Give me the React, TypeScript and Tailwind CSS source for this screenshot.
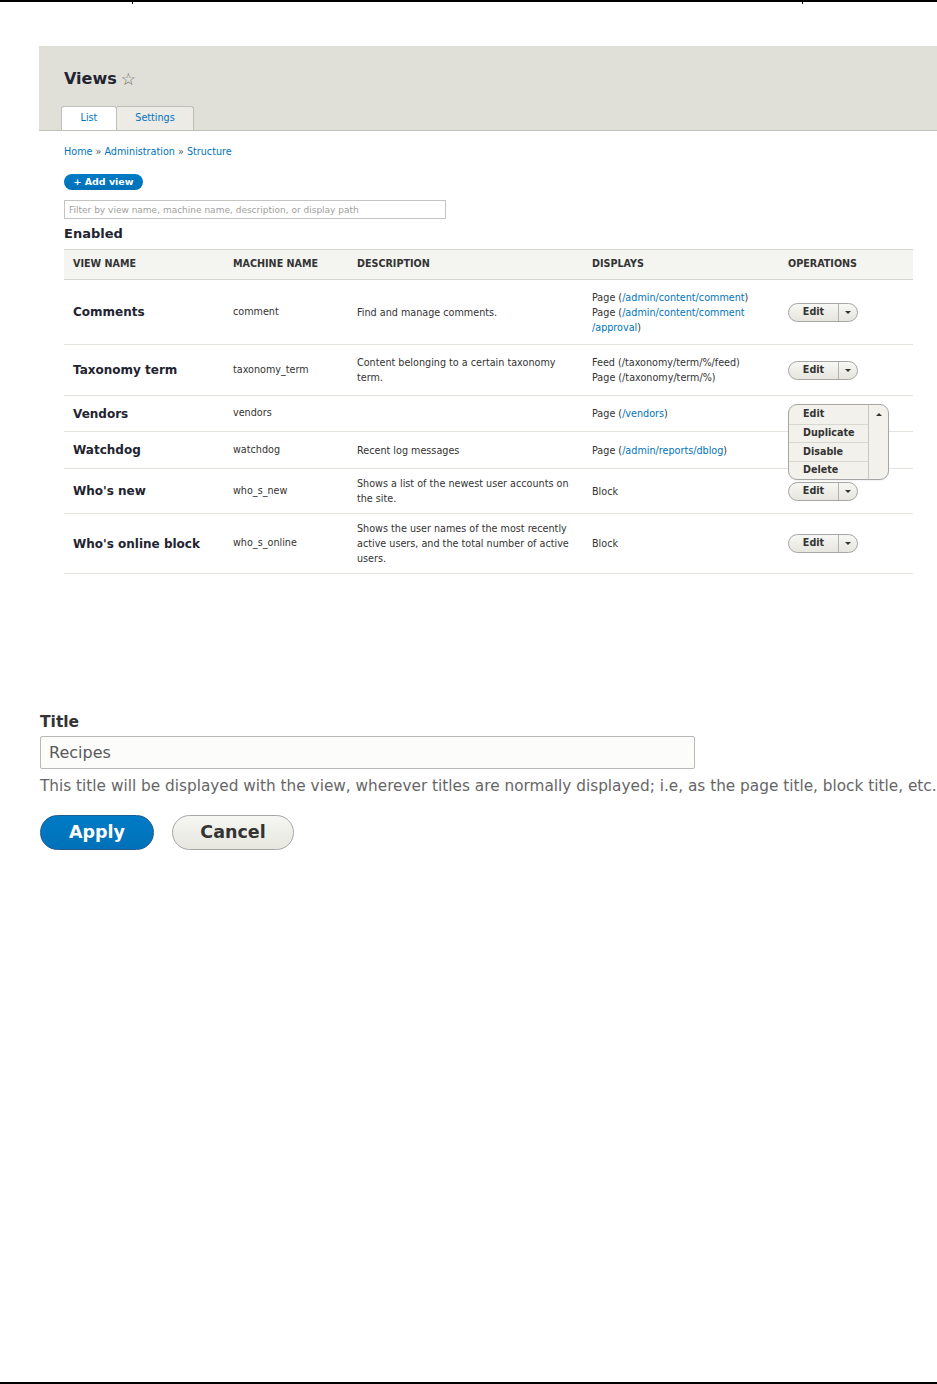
import type { ReactNode } from "react";

const link = "text-[#0074bd]";

function Caret({ up }: { up?: boolean }) {
    return up ? (
        <span className="block w-0 h-0 border-x-[3px] border-x-transparent border-b-[3px] border-b-[#333]" />
    ) : (
        <span className="block w-0 h-0 border-x-[3px] border-x-transparent border-t-[3px] border-t-[#333]" />
    );
}

function EditButton() {
    return (
        <div className="flex w-[70px] h-[19px] rounded-full border border-[#a6a6a6] bg-gradient-to-b from-[#f7f7f4] to-[#e6e5de] text-[9.6px] font-bold text-[#333]">
            <div className="w-[50px] flex items-center justify-center border-r border-[#b4b4ae]">Edit</div>
            <div className="flex-1 flex items-center justify-center"><Caret /></div>
        </div>
    );
}

function OpenDropdown() {
    const items = ["Edit", "Duplicate", "Disable", "Delete"];
    return (
        <div className="relative h-[19px]">
            <div className="absolute left-0 top-0 z-10 flex w-[101px] rounded-[9px] border border-[#a6a6a6] bg-[#f2f1eb] text-[9.6px] font-bold text-[#333] shadow-[0_1px_1px_rgba(0,0,0,0.05)]">
                <div className="w-[80px] flex flex-col border-r border-[#c8c8c0]">
                    {items.map((item, i) => (
                        <div key={item} className={`h-[18.5px] flex items-center pl-[14px] ${i > 0 ? "border-t border-[#d8d8d0]" : ""}`}>
                            {item}
                        </div>
                    ))}
                </div>
                <div className="flex-1 flex justify-center pt-[8px]"><Caret up /></div>
            </div>
        </div>
    );
}

type RowProps = {
    name: string;
    machine: string;
    desc?: ReactNode;
    displays: ReactNode;
    height: string;
    ops?: ReactNode;
    opsTop?: boolean;
};

function Row({ name, machine, desc, displays, height, ops, opsTop }: RowProps) {
    return (
        <tr className={`${height} border-b border-[#e4e3dd]`}>
            <td className="pl-[9px] text-[12px] font-bold text-[#222330]">{name}</td>
            <td className="pl-[9px] text-[9.65px] text-[#333]">{machine}</td>
            <td className="pl-[9px] text-[9.65px] leading-[15px] text-[#333] whitespace-nowrap">{desc}</td>
            <td className="pl-[9px] text-[9.65px] leading-[15px] text-[#333] whitespace-nowrap">{displays}</td>
            <td className={`pl-[9px] ${opsTop ? "align-top pt-[8px]" : ""}`}>{ops ?? <EditButton />}</td>
        </tr>
    );
}

export default function App() {
    return (
        <div className="flex flex-col h-[1384px] w-[937px] bg-white font-['DejaVu_Sans',sans-serif] text-[#222330]">
            <div className="flex h-[4px] border-t-2 border-black shrink-0">
                <div className="w-[133px] h-[2px] border-r border-black" />
                <div className="w-[670px] h-[2px] border-r border-black" />
            </div>

            <div className="ml-[39px] mt-[42px] h-[85px] shrink-0 bg-[#e0e0d8] border-b border-[#bfbfba] pl-[22px] flex flex-col">
                <div className="h-[60px] pt-[24px] pl-[3px] flex items-start">
                    <h1 className="text-[16px] leading-[18px] font-bold text-[#222330]">Views</h1>
                    <span className="ml-[4px] text-[17px] leading-[18px] text-[#6f6f68]">☆</span>
                </div>
                <div className="flex h-[24px]">
                    <div className="w-[56px] flex items-center justify-center bg-white border border-b-0 border-[#bfbfba] rounded-t-[3px] text-[9.6px] text-[#0074bd]">List</div>
                    <div className="w-[77px] flex items-center justify-center bg-[#ecebe5] border border-l-0 border-b-0 border-[#bfbfba] rounded-tr-[3px] text-[9.6px] text-[#0074bd]">Settings</div>
                </div>
            </div>

            <div className="pl-[64px] shrink-0">
                <div className="mt-[15px] h-[12px] text-[9.65px] leading-[12px]">
                    <a className={link}>Home</a>
                    <span className="text-[#555]"> » </span>
                    <a className={link}>Administration</a>
                    <span className="text-[#555]"> » </span>
                    <a className={link}>Structure</a>
                </div>
                <button className="mt-[16px] w-[79px] h-[16px] rounded-full bg-gradient-to-b from-[#007bc6] to-[#0071b8] text-white text-[9.5px] font-bold leading-[16px] block">
                    + Add view
                </button>
                <input
                    className="mt-[10px] block w-[382px] h-[19px] border border-[#c4c4c0] bg-white px-[4px] text-[9px] outline-none placeholder:text-[#a0a09c]"
                    placeholder="Filter by view name, machine name, description, or display path"
                />
                <h2 className="mt-[7px] h-[16px] text-[13px] leading-[16px] font-bold text-[#222330]">Enabled</h2>

                <table className="mt-[7px] w-[849px] table-fixed border-collapse">
                    <colgroup>
                        <col className="w-[160px]" />
                        <col className="w-[124px]" />
                        <col className="w-[235px]" />
                        <col className="w-[196px]" />
                        <col className="w-[134px]" />
                    </colgroup>
                    <thead>
                        <tr className="h-[30px] bg-[#f4f4f0] border-t border-b border-[#d6d5ce] text-left text-[9.6px] font-bold uppercase text-[#333]">
                            <th className="pl-[9px]">View name</th>
                            <th className="pl-[9px]">Machine name</th>
                            <th className="pl-[9px]">Description</th>
                            <th className="pl-[9px]">Displays</th>
                            <th className="pl-[9px]">Operations</th>
                        </tr>
                    </thead>
                    <tbody>
                        <Row
                            name="Comments"
                            machine="comment"
                            height="h-[65px]"
                            desc="Find and manage comments."
                            displays={
                                <>
                                    <div>Page (<a className={link}>/admin/content/comment</a>)</div>
                                    <div>Page (<a className={link}>/admin/content/comment</a></div>
                                    <div><a className={link}>/approval</a>)</div>
                                </>
                            }
                        />
                        <Row
                            name="Taxonomy term"
                            machine="taxonomy_term"
                            height="h-[51px]"
                            desc={<>Content belonging to a certain taxonomy<br />term.</>}
                            displays={<>Feed (/taxonomy/term/%/feed)<br />Page (/taxonomy/term/%)</>}
                        />
                        <Row
                            name="Vendors"
                            machine="vendors"
                            height="h-[36px]"
                            displays={<>Page (<a className={link}>/vendors</a>)</>}
                            ops={<OpenDropdown />}
                            opsTop
                        />
                        <Row
                            name="Watchdog"
                            machine="watchdog"
                            height="h-[37px]"
                            desc="Recent log messages"
                            displays={<>Page (<a className={link}>/admin/reports/dblog</a>)</>}
                            ops={<div />}
                        />
                        <Row
                            name="Who's new"
                            machine="who_s_new"
                            height="h-[45px]"
                            desc={<>Shows a list of the newest user accounts on<br />the site.</>}
                            displays="Block"
                        />
                        <Row
                            name="Who's online block"
                            machine="who_s_online"
                            height="h-[60px]"
                            desc={<>Shows the user names of the most recently<br />active users, and the total number of active<br />users.</>}
                            displays="Block"
                        />
                    </tbody>
                </table>
            </div>

            <div className="pl-[40px] mt-[139px] shrink-0">
                <label className="block h-[18px] text-[15.5px] leading-[18px] font-bold text-[#333]">Title</label>
                <input
                    className="mt-[5px] block w-[655px] h-[33px] border border-[#b8b8b8] rounded-[2px] bg-[#fcfcfa] px-[8px] text-[16px] text-[#595959] outline-none"
                    defaultValue="Recipes"
                />
                <p className="mt-[7px] h-[20px] text-[15.3px] leading-[20px] text-[#666] whitespace-nowrap">
                    This title will be displayed with the view, wherever titles are normally displayed; i.e, as the page title, block title, etc.
                </p>
                <div className="mt-[19px] flex gap-[18px]">
                    <button className="w-[114px] h-[35px] rounded-full bg-gradient-to-b from-[#007bc6] to-[#0071b8] border border-[#1e5c90] text-white text-[17.5px] font-bold">
                        Apply
                    </button>
                    <button className="w-[122px] h-[35px] rounded-full bg-gradient-to-b from-[#f6f6f3] to-[#e7e7df] border border-[#a6a6a6] text-[#333] text-[17.5px] font-bold">
                        Cancel
                    </button>
                </div>
            </div>

            <div className="mt-auto h-[2px] bg-black shrink-0" />
        </div>
    );
}
